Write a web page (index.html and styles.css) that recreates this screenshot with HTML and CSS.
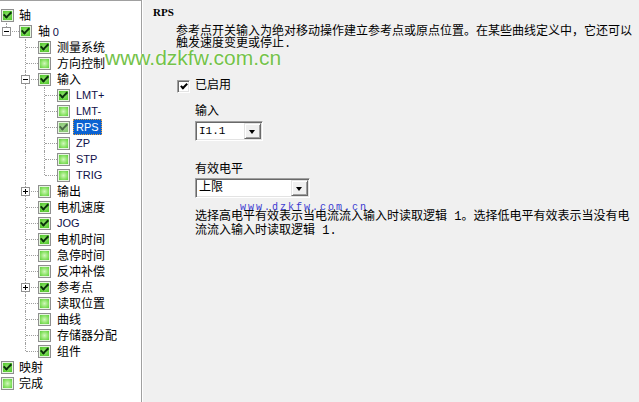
FILE: index.html
```html
<!DOCTYPE html>
<html>
<head>
<meta charset="utf-8">
<link rel="stylesheet" href="styles.css">
</head>
<body>
<div class="app">
  <div class="tree">
    <div class="row"><span class="cb on root"></span><span class="lb">轴</span></div>
    <div class="row"><span class="cell l"><span class="exp minus"></span></span><span class="cb on"></span><span class="lb">轴 <span class="lat">0</span></span></div>
    <div class="row"><span class="cell"></span><span class="cell t"></span><span class="cb on"></span><span class="lb">测量系统</span></div>
    <div class="row"><span class="cell"></span><span class="cell t"></span><span class="cb"></span><span class="lb">方向控制</span></div>
    <div class="row"><span class="cell"></span><span class="cell t"><span class="exp minus"></span></span><span class="cb on"></span><span class="lb">输入</span></div>
    <div class="row"><span class="cell"></span><span class="cell v"></span><span class="cell t"></span><span class="cb on"></span><span class="lb lat">LMT+</span></div>
    <div class="row"><span class="cell"></span><span class="cell v"></span><span class="cell t"></span><span class="cb"></span><span class="lb lat">LMT-</span></div>
    <div class="row"><span class="cell"></span><span class="cell v"></span><span class="cell t"></span><span class="cb on dim"></span><span class="lb lat sel">RPS</span></div>
    <div class="row"><span class="cell"></span><span class="cell v"></span><span class="cell t"></span><span class="cb"></span><span class="lb lat">ZP</span></div>
    <div class="row"><span class="cell"></span><span class="cell v"></span><span class="cell t"></span><span class="cb"></span><span class="lb lat">STP</span></div>
    <div class="row"><span class="cell"></span><span class="cell v"></span><span class="cell l"></span><span class="cb"></span><span class="lb lat">TRIG</span></div>
    <div class="row"><span class="cell"></span><span class="cell t"><span class="exp plus"></span></span><span class="cb"></span><span class="lb">输出</span></div>
    <div class="row"><span class="cell"></span><span class="cell t"></span><span class="cb on"></span><span class="lb">电机速度</span></div>
    <div class="row"><span class="cell"></span><span class="cell t"></span><span class="cb on"></span><span class="lb lat">JOG</span></div>
    <div class="row"><span class="cell"></span><span class="cell t"></span><span class="cb on"></span><span class="lb">电机时间</span></div>
    <div class="row"><span class="cell"></span><span class="cell t"></span><span class="cb"></span><span class="lb">急停时间</span></div>
    <div class="row"><span class="cell"></span><span class="cell t"></span><span class="cb"></span><span class="lb">反冲补偿</span></div>
    <div class="row"><span class="cell"></span><span class="cell t"><span class="exp plus"></span></span><span class="cb on"></span><span class="lb">参考点</span></div>
    <div class="row"><span class="cell"></span><span class="cell t"></span><span class="cb"></span><span class="lb">读取位置</span></div>
    <div class="row"><span class="cell"></span><span class="cell t"></span><span class="cb"></span><span class="lb">曲线</span></div>
    <div class="row"><span class="cell"></span><span class="cell t"></span><span class="cb"></span><span class="lb">存储器分配</span></div>
    <div class="row"><span class="cell"></span><span class="cell l"></span><span class="cb on"></span><span class="lb">组件</span></div>
    <div class="row"><span class="cb on root"></span><span class="lb">映射</span></div>
    <div class="row"><span class="cb root"></span><span class="lb">完成</span></div>
  </div>

  <div class="panel">
    <div class="title">RPS</div>
    <p class="desc">参考点开关输入为绝对移动操作建立参考点或原点位置。在某些曲线定义中，它还可以触发速度变更或停止.</p>
    <div class="enable"><span class="chk"></span><span class="enable-text">已启用</span></div>
    <div class="field">
      <div class="lbl">输入</div>
      <div class="combo narrow"><span class="val mono">I1.1</span><span class="btn"></span></div>
      <div class="lbl lbl2">有效电平</div>
      <div class="combo wide"><span class="val">上限</span><span class="btn"></span></div>
      <p class="desc2">选择高电平有效表示当电流流入输入时读取逻辑 1。选择低电平有效表示当没有电流流入输入时读取逻辑 1.</p>
    </div>
  </div>

  <div class="wm-big">www.dzkfw.com.cn</div>
  <div class="wm-small">www.dzkfw.com.cn</div>
</div>
</body>
</html>
```

FILE: styles.css
```css
html, body {
  margin: 0;
  padding: 0;
}

body {
  background: #f0f0f0;
  font-family: "Noto Sans CJK SC", sans-serif;
  font-size: 12px;
  color: #000;
}

.app {
  position: relative;
  display: flex;
  height: 402px;
  overflow: hidden;
}

/* ---------- tree ---------- */
.tree {
  flex: none;
  width: 142px;
  box-sizing: border-box;
  background: #fff;
  border-top: 1px solid #a0a0a0;
  border-right: 1px solid #a0a0a0;
  box-shadow: 1px 0 0 #fff;
  padding-top: 6px;
  margin-right: 1px;
}

.row {
  display: flex;
  align-items: center;
  height: 16px;
}

.cell {
  position: relative;
  flex: none;
  width: 19px;
  height: 16px;
}

.cell.v::before,
.cell.t::before,
.cell.l::before {
  content: "";
  position: absolute;
  left: 6px;
  top: 0;
  bottom: 0;
  border-left: 1px dotted #a0a0a0;
}

.cell.l::before {
  bottom: auto;
  height: 8px;
}

.cell.t::after,
.cell.l::after {
  content: "";
  position: absolute;
  left: 7px;
  top: 8px;
  width: 12px;
  border-top: 1px dotted #a0a0a0;
}

.exp {
  position: absolute;
  z-index: 1;
  left: 2px;
  top: 4px;
  width: 9px;
  height: 9px;
  box-sizing: border-box;
  border: 1px solid #919191;
  background: #fff;
}

.exp::before {
  content: "";
  position: absolute;
  left: 1px;
  top: 3px;
  width: 5px;
  height: 1px;
  background: #000;
}

.exp.plus::after {
  content: "";
  position: absolute;
  left: 3px;
  top: 1px;
  width: 1px;
  height: 5px;
  background: #000;
}

.cb {
  position: relative;
  flex: none;
  width: 13px;
  height: 13px;
  box-sizing: border-box;
  border: 1px solid #8f8f8f;
  background: radial-gradient(circle at 50% 50%, #d2f7bd 0%, #8fe46b 45%, #44c224 100%);
  box-shadow: inset 0 0 0 1px #e6f6df;
}

.cb.root {
  margin-left: 1px;
  margin-right: -1px;
}

.cb.on {
  background: radial-gradient(circle at 50% 50%, #9be57a 0%, #5ccd36 60%, #3fbd1c 100%);
}

.cb.on::after {
  content: "";
  position: absolute;
  left: 3px;
  top: 0px;
  width: 3px;
  height: 6px;
  border: solid #0b330b;
  border-width: 0 2px 2px 0;
  transform: rotate(45deg);
}

.cb.dim {
  background: radial-gradient(circle at 50% 50%, #a8d898 0%, #78c060 100%);
}

.cb.dim::after {
  border-color: #4a6a48;
}

.lb {
  margin-left: 3px;
  padding: 0 2px;
  border: 1px solid transparent;
  line-height: 14px;
  white-space: nowrap;
}

.lat {
  font-family: "Liberation Sans", sans-serif;
  font-size: 11px;
  color: #10104a;
}

.lb.sel {
  background: #0a62d2;
  color: #fff;
  border: 1px dotted #e8a040;
}

/* ---------- panel ---------- */
.panel {
  flex: 1;
  padding: 5px 0 0 10px;
  font-family: "Liberation Mono", "Noto Sans CJK SC", monospace;
}

.title {
  font-family: "Liberation Serif", serif;
  font-weight: bold;
  font-size: 11px;
  line-height: 14px;
}

.desc {
  margin: 7px 0 0 23px;
  width: 462px;
  line-height: 12px;
}

.enable {
  display: flex;
  align-items: center;
  height: 14px;
  margin: 29px 0 0 24px;
}

.chk {
  position: relative;
  width: 13px;
  height: 13px;
  box-sizing: border-box;
  background: #fff;
  border: 1px solid;
  border-color: #a0a0a0 #fff #fff #a0a0a0;
  box-shadow: inset 1px 1px 0 #696969, inset -1px -1px 0 #e3e3e3;
}

.chk::after {
  content: "";
  position: absolute;
  left: 4px;
  top: 1px;
  width: 2px;
  height: 5px;
  border: solid #000;
  border-width: 0 2px 2px 0;
  transform: rotate(45deg);
}

.enable-text {
  margin-left: 5px;
  line-height: 14px;
}

.field {
  margin-left: 42px;
}

.lbl {
  margin-top: 12px;
  line-height: 14px;
}

.lbl2 {
  margin-top: 22px;
}

.combo {
  display: flex;
  align-items: center;
  justify-content: space-between;
  height: 20px;
  box-sizing: border-box;
  margin-top: 2px;
  background: #fff;
  border: 1px solid;
  border-color: #a0a0a0 #fff #fff #a0a0a0;
  box-shadow: inset 1px 1px 0 #696969, inset -1px -1px 0 #e3e3e3;
}

.lbl2 + .combo {
  margin-top: 1px;
}

.combo.narrow { width: 68px; }
.combo.wide { width: 115px; }

.val {
  padding-left: 3px;
  line-height: 14px;
}

.val.mono {
  font-size: 11px;
}

.btn {
  position: relative;
  flex: none;
  width: 17px;
  height: 16px;
  margin-right: 1px;
  box-sizing: border-box;
  background: #f0f0f0;
  border: 1px solid;
  border-color: #e3e3e3 #696969 #696969 #e3e3e3;
  box-shadow: inset 1px 1px 0 #fff, inset -1px -1px 0 #a0a0a0;
}

.btn::after {
  content: "";
  position: absolute;
  left: 4px;
  top: 6px;
  border-style: solid;
  border-width: 4px 3.5px 0 3.5px;
  border-color: #000 transparent transparent transparent;
}

.desc2 {
  margin: 12px 0 0 0;
  width: 440px;
  line-height: 14px;
}

/* ---------- watermarks ---------- */
.wm-big {
  position: absolute;
  left: 105px;
  top: 47px;
  font-family: "Liberation Sans", sans-serif;
  font-size: 21px;
  line-height: 21px;
  color: #74c24a;
  text-shadow: 0 0 2px #fff, 0 0 1px #fff;
}

.wm-small {
  position: absolute;
  left: 240px;
  top: 202px;
  font-family: "Liberation Mono", monospace;
  font-size: 10px;
  line-height: 12px;
  letter-spacing: 2px;
  color: #3a3ad0;
}
```
